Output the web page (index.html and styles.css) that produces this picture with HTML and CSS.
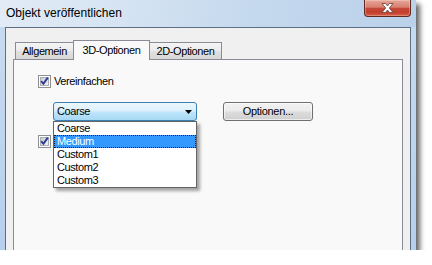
FILE: index.html
```html
<!DOCTYPE html>
<html lang="de">
<head>
<meta charset="utf-8">
<title>Objekt veröffentlichen</title>
<link rel="stylesheet" href="styles.css">
</head>
<body>
<div class="window">
  <div class="titlebar">
    <span class="title">Objekt veröffentlichen</span>
    <div class="close">
      <svg width="13" height="10" viewBox="0 0 13 10">
        <path d="M1 0.5 H4.6 L6.5 3 L8.4 0.5 H12 L8.3 5 L12 9.5 H8.4 L6.5 7 L4.6 9.5 H1 L4.7 5 Z" fill="#fff" stroke="#6e4b48" stroke-width="0.9" stroke-linejoin="round"/>
      </svg>
    </div>
  </div>
  <div class="client">
    <div class="tabs">
      <div class="tab first">Allgemein</div>
      <div class="tab active">3D-Optionen</div>
      <div class="tab last">2D-Optionen</div>
    </div>
    <div class="panel">
      <label class="check">
        <svg class="box" width="13" height="13" viewBox="0 0 13 13">
          <defs><linearGradient id="cb1" x1="0" y1="0" x2="1" y2="1"><stop offset="0" stop-color="#c6cbd3"/><stop offset="1" stop-color="#f3f4f6"/></linearGradient></defs>
          <rect x="0.5" y="0.5" width="12" height="12" fill="#fff" stroke="#8f8f8f"/>
          <rect x="2.5" y="2.5" width="8" height="8" fill="url(#cb1)" stroke="#a9aeb5"/>
          <path d="M3.2 6.2 L5.4 8.8 L9.8 2.6" fill="none" stroke="#2f3990" stroke-width="1.9"/>
        </svg>
        <span>Vereinfachen</span>
      </label>
      <div class="row">
        <div class="combo">
          <span>Coarse</span>
          <svg width="7" height="4" viewBox="0 0 7 4"><path d="M0 0 H7 L3.5 4 Z" fill="#000"/></svg>
          <ul class="list">
            <li>Coarse</li>
            <li class="sel">Medium</li>
            <li>Custom1</li>
            <li>Custom2</li>
            <li>Custom3</li>
          </ul>
        </div>
        <button class="btn">Optionen...</button>
      </div>
      <label class="check second">
        <svg class="box" width="13" height="13" viewBox="0 0 13 13">
          <defs><linearGradient id="cb2" x1="0" y1="0" x2="1" y2="1"><stop offset="0" stop-color="#c6cbd3"/><stop offset="1" stop-color="#f3f4f6"/></linearGradient></defs>
          <rect x="0.5" y="0.5" width="12" height="12" fill="#fff" stroke="#8f8f8f"/>
          <rect x="2.5" y="2.5" width="8" height="8" fill="url(#cb2)" stroke="#a9aeb5"/>
          <path d="M3.2 6.2 L5.4 8.8 L9.8 2.6" fill="none" stroke="#2f3990" stroke-width="1.9"/>
        </svg>
      </label>
    </div>
  </div>
</div>
</body>
</html>
```
FILE: styles.css
```css
html, body {
  margin: 0;
  background: #fff;
}
body {
  font-family: "Liberation Sans", Arial, sans-serif;
  color: #000;
}
.window {
  width: 416px;
  height: 250px;
  box-sizing: border-box;
  padding: 0 5px;
  display: flex;
  flex-direction: column;
  background: linear-gradient(#c9dcf0, #b6cfec);
  box-shadow: 4px 4px 5px rgba(0, 0, 0, 0.6);
  overflow: hidden;
}
.titlebar {
  height: 27px;
  margin: 0 -5px;
  padding: 0 5px;
  display: flex;
  justify-content: space-between;
  align-items: flex-start;
  background: linear-gradient(100deg, #e2ebf6 0%, #d5e3f2 30%, #c5d9ee 60%, #bad1ea 100%);
}
.title {
  font-size: 12px;
  line-height: 14px;
  padding: 6px 0 0 1px;
}
.close {
  width: 47px;
  height: 17px;
  box-sizing: border-box;
  border: 1px solid #5e2a22;
  border-top: none;
  border-radius: 0 0 4px 4px;
  background: linear-gradient(#e6a597 0%, #d98070 45%, #c5493a 52%, #c03f2c 75%, #d85c42 100%);
  box-shadow: inset 0 0 0 1px rgba(255, 255, 255, 0.28);
  display: flex;
  align-items: center;
  justify-content: center;
}
.client {
  flex: 1;
  display: flex;
  flex-direction: column;
  background: #f0f0f0;
  border: 1px solid #5e6f83;
  border-bottom: none;
  padding: 12px 7px 0 7px;
  min-height: 0;
}
.tabs {
  display: flex;
  align-items: flex-end;
  height: 20px;
  padding-left: 2px;
  margin-bottom: -1px;
}
.tab {
  box-sizing: border-box;
  height: 17px;
  margin-bottom: 1px;
  border: 1px solid #898c95;
  border-bottom: none;
  background: linear-gradient(#f4f4f4, #ececec 45%, #e0e0e0 55%, #d7d7d7);
  font-size: 11px;
  letter-spacing: -0.4px;
  line-height: 16px;
  text-align: center;
}
.tab.first {
  width: 58px;
  border-right: none;
}
.tab.last {
  width: 72px;
  border-left: none;
}
.tab.active {
  position: relative;
  z-index: 1;
  width: 77px;
  height: 20px;
  margin-bottom: 0;
  line-height: 18px;
  background: #f9f9f9;
}
.panel {
  flex: 1;
  display: flex;
  flex-direction: column;
  align-items: flex-start;
  background: #f9f9f9;
  border: 1px solid #898c95;
  border-bottom: none;
  padding: 15px 0 0 24px;
}
.check {
  display: flex;
  align-items: center;
  gap: 3px;
  height: 13px;
  font-size: 11px;
  letter-spacing: -0.4px;
  line-height: 13px;
}
.box {
  display: block;
  flex: none;
}
.row {
  display: flex;
  gap: 26px;
  margin: 14px 0 0 15px;
}
.second {
  margin-top: 14px;
}
.combo {
  position: relative;
  width: 144px;
  height: 19px;
  box-sizing: border-box;
  border: 1px solid #3c7fb1;
  border-radius: 3px;
  background: linear-gradient(#ecf7fd, #dbf0fc 48%, #bfe6fb 52%, #a7d8f4);
  padding: 0 4px 0 3px;
  display: flex;
  align-items: center;
  justify-content: space-between;
  font-size: 11px;
  letter-spacing: -0.4px;
  line-height: 17px;
}
.combo svg {
  display: block;
  margin-top: 1px;
}
.list {
  position: absolute;
  z-index: 2;
  left: -1px;
  top: 18px;
  width: 144px;
  box-sizing: border-box;
  margin: 0;
  padding: 0;
  list-style: none;
  background: #fff;
  border: 1px solid #646464;
  box-shadow: 3px 3px 3px rgba(0, 0, 0, 0.35);
}
.list li {
  height: 13px;
  line-height: 13px;
  padding-left: 3px;
}
.list li.sel {
  background: #3399ff;
  color: #fff;
  outline: 1px dotted #1a1a1a;
  outline-offset: -1px;
}
.btn {
  width: 90px;
  height: 19px;
  box-sizing: border-box;
  padding: 0;
  border: 1px solid #707070;
  border-radius: 3px;
  background: linear-gradient(#f2f2f2, #ebebeb 48%, #dddddd 52%, #cfcfcf);
  box-shadow: inset 0 0 0 1px rgba(255, 255, 255, 0.6);
  font-family: "Liberation Sans", Arial, sans-serif;
  font-size: 11px;
  letter-spacing: -0.3px;
  line-height: 17px;
  color: #000;
}
```
